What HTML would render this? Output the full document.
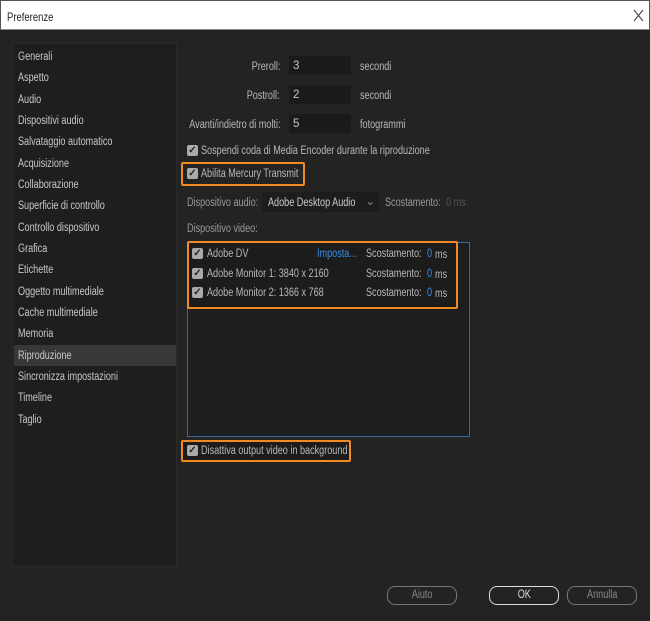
<!DOCTYPE html>
<html><head><meta charset="utf-8"><style>
*{box-sizing:border-box;margin:0;padding:0}
body{width:650px;height:621px;background:#232323;font-family:"Liberation Sans",sans-serif;font-size:11.5px;color:#b8b8b8;position:relative;overflow:hidden}
.a,.si{position:absolute;white-space:nowrap;transform:scaleX(.79);transform-origin:left center;margin-top:1px}
.r{transform-origin:right center}
#title{position:absolute;left:0;top:0;width:650px;height:30px;background:#fff;border:1px solid #555;border-bottom:1px solid #888}
#side{position:absolute;left:12px;top:43px;width:165px;height:524px;background:#1e1e1e;border:1px solid #2a2a2a}
.si{left:5px;color:#c8c8c8}
.inp{position:absolute;width:62px;height:19px;background:#1a1a1a;color:#c8c8c8;padding:4px 0 0 4px}
.cb{position:absolute;width:11px;height:11px;background:#aaa;border-radius:2px;color:#222;font-size:10px;line-height:11px;text-align:center;font-weight:bold}
.or{position:absolute;border:2px solid #f08a24;border-radius:2px}
.btn{position:absolute;top:586px;height:19px;border:1.5px solid #777;border-radius:8px;text-align:center;line-height:17px;color:#888}
.btn span{display:inline-block;transform:scaleX(.79)}
.bl{color:#3a8ee6}
</style></head><body>
<div id="title"><span class="a" style="left:6px;top:8px;color:#222;font-size:12px">Preferenze</span><svg style="position:absolute;left:632px;top:8px" width="11" height="13"><path d="M1 1L10 12M10 1L1 12" stroke="#444" stroke-width="1.1" fill="none"/></svg></div>
<div id="side">
<div style="position:absolute;left:1px;top:301px;width:162px;height:21px;background:#383838"></div>
<div class="si" style="top:6px">Generali</div>
<div class="si" style="top:27px">Aspetto</div>
<div class="si" style="top:49px">Audio</div>
<div class="si" style="top:70px">Dispositivi audio</div>
<div class="si" style="top:91px">Salvataggio automatico</div>
<div class="si" style="top:113px">Acquisizione</div>
<div class="si" style="top:134px">Collaborazione</div>
<div class="si" style="top:155px">Superficie di controllo</div>
<div class="si" style="top:177px">Controllo dispositivo</div>
<div class="si" style="top:198px">Grafica</div>
<div class="si" style="top:219px">Etichette</div>
<div class="si" style="top:241px">Oggetto multimediale</div>
<div class="si" style="top:262px">Cache multimediale</div>
<div class="si" style="top:283px">Memoria</div>
<div class="si" style="top:305px">Riproduzione</div>
<div class="si" style="top:326px">Sincronizza impostazioni</div>
<div class="si" style="top:347px">Timeline</div>
<div class="si" style="top:369px">Taglio</div>
</div>
<div class="a r" style="right:370px;top:60px">Preroll:</div>
<div class="inp" style="left:289px;top:56px">3</div><div class="a" style="left:360px;top:60px">secondi</div>
<div class="a r" style="right:370px;top:89px">Postroll:</div>
<div class="inp" style="left:289px;top:85px">2</div><div class="a" style="left:360px;top:89px">secondi</div>
<div class="a r" style="right:370px;top:118px">Avanti/indietro di molti:</div>
<div class="inp" style="left:289px;top:114px">5</div><div class="a" style="left:360px;top:118px">fotogrammi</div>
<div class="cb" style="left:187px;top:145px">✓</div><div class="a" style="left:201px;top:144px">Sospendi coda di Media Encoder durante la riproduzione</div>
<div class="or" style="left:181px;top:162px;width:124px;height:24px"></div>
<div class="cb" style="left:187px;top:168px">✓</div><div class="a" style="left:201px;top:167px">Abilita Mercury Transmit</div>
<div class="a" style="left:187px;top:196px;color:#999">Dispositivo audio:</div>
<div style="position:absolute;left:262px;top:192px;width:117px;height:20px;background:#1d1d1d;color:#ccc"><span class="a" style="left:6px;top:4px">Adobe Desktop Audio</span><span style="position:absolute;right:4px;top:2px;color:#888">⌄</span></div>
<div class="a" style="left:385px;top:196px;color:#999">Scostamento:</div><div class="a" style="left:446px;top:196px;color:#555">0 ms</div>
<div class="a" style="left:187px;top:222px;color:#999">Dispositivo video:</div>
<div style="position:absolute;left:187px;top:242px;width:283px;height:195px;border:1px solid #3b6a9a;background:#1e1e1e"></div>
<div class="or" style="left:187px;top:241px;width:271px;height:68px;background:#1c1c1c"></div>
<div class="cb" style="left:192px;top:248px">✓</div><div class="a" style="left:207px;top:247px">Adobe DV</div><div class="a bl" style="left:317px;top:247px">Imposta...</div><div class="a" style="left:366px;top:247px">Scostamento:</div><div class="a bl" style="left:427px;top:247px">0</div><div class="a" style="left:435px;top:248px">ms</div>
<div class="cb" style="left:192px;top:268px">✓</div><div class="a" style="left:207px;top:267px">Adobe Monitor 1: 3840 x 2160</div><div class="a" style="left:366px;top:267px">Scostamento:</div><div class="a bl" style="left:427px;top:267px">0</div><div class="a" style="left:435px;top:268px">ms</div>
<div class="cb" style="left:192px;top:287px">✓</div><div class="a" style="left:207px;top:286px">Adobe Monitor 2: 1366 x 768</div><div class="a" style="left:366px;top:286px">Scostamento:</div><div class="a bl" style="left:427px;top:286px">0</div><div class="a" style="left:435px;top:287px">ms</div>
<div class="or" style="left:181px;top:440px;width:170px;height:22px;background:#1c1c1c"></div>
<div class="cb" style="left:187px;top:445px">✓</div><div class="a" style="left:201px;top:444px">Disattiva output video in background</div>
<div class="btn" style="left:387px;width:70px"><span>Aiuto</span></div>
<div class="btn" style="left:489px;width:70px;border-color:#ddd;color:#ddd"><span>OK</span></div>
<div class="btn" style="left:567px;width:70px"><span>Annulla</span></div>
</body></html>
